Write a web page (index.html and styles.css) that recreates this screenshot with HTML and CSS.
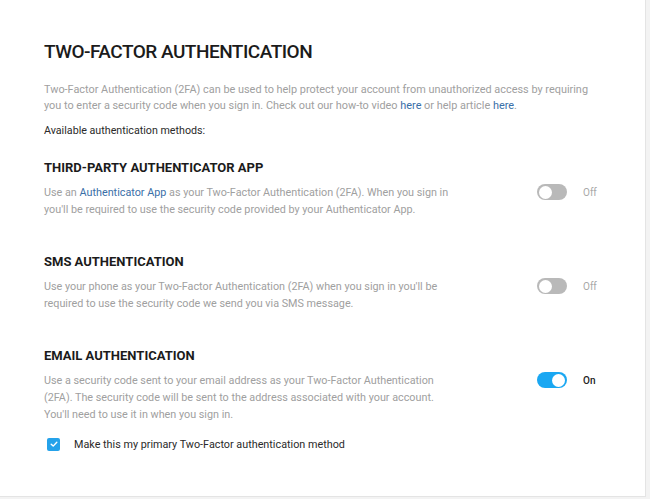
FILE: index.html
```html
<!DOCTYPE html>
<html>
<head>
<meta charset="utf-8">
<link rel="stylesheet" href="styles.css">
</head>
<body>
<div class="card">
  <h1 class="title">TWO-FACTOR AUTHENTICATION</h1>
  <p class="intro">Two-Factor Authentication (2FA) can be used to help protect your account from unauthorized access by requiring<br>you to enter a security code when you sign in. Check out our how-to video <a class="link">here</a> or help article <a class="link">here</a>.</p>
  <p class="available">Available authentication methods:</p>

  <section class="method">
    <h2 class="method-title">THIRD-PARTY AUTHENTICATOR APP</h2>
    <div class="method-row">
      <p class="desc">Use an <a class="link">Authenticator App</a> as your Two-Factor Authentication (2FA). When you sign in<br>you'll be required to use the security code provided by your Authenticator App.</p>
      <div class="control">
        <span class="toggle"><span class="knob"></span></span>
        <span class="state">Off</span>
      </div>
    </div>
  </section>

  <section class="method">
    <h2 class="method-title">SMS AUTHENTICATION</h2>
    <div class="method-row">
      <p class="desc">Use your phone as your Two-Factor Authentication (2FA) when you sign in you'll be<br>required to use the security code we send you via SMS message.</p>
      <div class="control">
        <span class="toggle"><span class="knob"></span></span>
        <span class="state">Off</span>
      </div>
    </div>
  </section>

  <section class="method">
    <h2 class="method-title">EMAIL AUTHENTICATION</h2>
    <div class="method-row">
      <p class="desc">Use a security code sent to your email address as your Two-Factor Authentication<br>(2FA). The security code will be sent to the address associated with your account.<br>You'll need to use it in when you sign in.</p>
      <div class="control">
        <span class="toggle on"><span class="knob"></span></span>
        <span class="state on">On</span>
      </div>
    </div>
    <label class="primary">
      <span class="checkbox"><svg viewBox="0 0 12 12" width="12" height="12"><path d="M3.2 6.2 L5.2 8.1 L8.8 4.2" fill="none" stroke="#fff" stroke-width="1.4" stroke-linecap="round" stroke-linejoin="round"/></svg></span>
      <span class="primary-label">Make this my primary Two-Factor authentication method</span>
    </label>
  </section>
</div>
</body>
</html>
```

FILE: styles.css
```css
* { box-sizing: border-box; }
html, body { margin: 0; padding: 0; }
body {
  background: #f3f3f3;
  font-family: Roboto, "Liberation Sans", sans-serif;
  width: 650px;
  height: 499px;
  overflow: hidden;
}
.card {
  width: 646px;
  height: 497px;
  background: #fff;
  border-right: 1px solid #e4e4e4;
  border-bottom: 1px solid #e4e4e4;
  padding: 40px 0 0 44px;
}
.title {
  margin: 0;
  font-size: 19px;
  line-height: 24px;
  font-weight: 500;
  color: #1b1b1b;
  letter-spacing: -0.5px;
}
.intro {
  margin: 18px 0 0;
  font-size: 10.9px;
  line-height: 16px;
  color: #a0a0a0;
  white-space: nowrap;
}
.link { color: #3a6fa8; text-decoration: none; }
.available {
  margin: 9px 0 0;
  font-size: 10.7px;
  line-height: 16px;
  color: #2a2a2a;
}
.method { margin-top: 20px; }
.method + .method { margin-top: 35px; }
.method-title {
  margin: 0;
  font-size: 13px;
  line-height: 18px;
  font-weight: 700;
  color: #1b1b1b;
}
.method-row {
  display: grid;
  grid-template-columns: 493px auto;
  margin-top: 7px;
}
.desc {
  margin: 0;
  font-size: 10.8px;
  line-height: 17px;
  color: #a0a0a0;
  white-space: nowrap;
}
.control {
  display: flex;
  align-items: center;
  gap: 16px;
  margin-top: 0;
  height: 16px;
}
.toggle {
  width: 30px;
  height: 16px;
  border-radius: 8px;
  background: #b9b9b9;
  display: flex;
  align-items: center;
  padding: 0 2px;
}
.knob {
  width: 13px;
  height: 13px;
  border-radius: 50%;
  background: #fff;
}
.toggle.on { background: #1aa7f2; justify-content: flex-end; }
.state {
  font-size: 10px;
  color: #a8a8a8;
}
.state.on { color: #222; font-weight: 500; }
.primary {
  display: flex;
  align-items: center;
  gap: 14px;
  margin: 13px 0 0 3px;
  height: 16px;
}
.checkbox {
  width: 13px;
  height: 13px;
  border-radius: 2px;
  background: #25a2ea;
  display: flex;
  align-items: center;
  justify-content: center;
}
.primary-label {
  font-size: 10.8px;
  color: #2a2a2a;
}
```
